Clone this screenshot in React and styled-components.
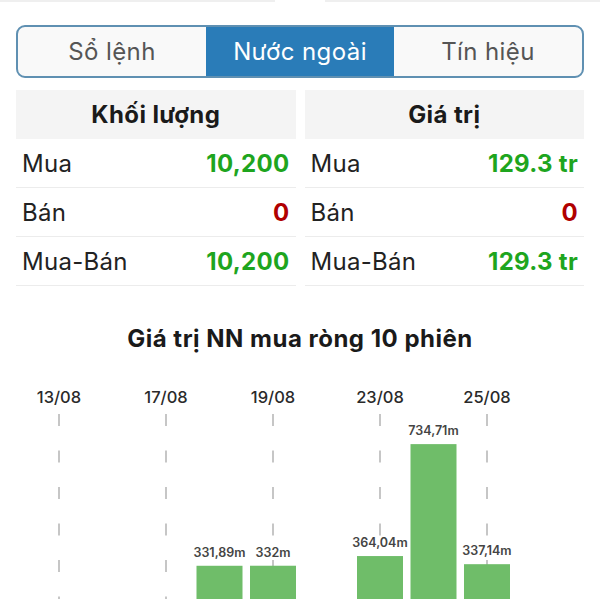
import React from 'react';
import styled, { createGlobalStyle } from 'styled-components';

const Global = createGlobalStyle`
  body {
    margin: 0;
    background: #ffffff;
    font-family: Inter, Roboto, "Liberation Sans", Arial, sans-serif;
  }
`;

const Page = styled.div`
  width: 600px;
  height: 600px;
  overflow: hidden;
  background: #fff;
`;

const TopEdge = styled.div`
  display: flex;
  gap: 50px;
  height: 2px;
  & > span {
    flex: 1;
    background: #efefef;
  }
`;

const Inner = styled.div`
  padding: 0 16px;
`;

const Segmented = styled.div`
  margin-top: 23px;
  display: grid;
  grid-template-columns: 1fr 1fr 1fr;
  height: 53px;
  box-sizing: border-box;
  border: 2px solid #5f90b2;
  border-radius: 9px;
  overflow: hidden;
  background: #f9f9f9;
`;

const Segment = styled.div`
  display: flex;
  align-items: center;
  justify-content: center;
  font-size: 24px;
  letter-spacing: 0.4px;
  color: ${p => (p.active ? '#ffffff' : '#555555')};
  background: ${p => (p.active ? '#2a7cb8' : 'transparent')};
`;

const Tables = styled.div`
  margin-top: 12px;
  display: grid;
  grid-template-columns: 1fr 1fr;
  column-gap: 9px;
`;

const Column = styled.div`
  display: flex;
  flex-direction: column;
`;

const Header = styled.div`
  height: 49px;
  display: flex;
  align-items: center;
  justify-content: center;
  background: #f4f4f4;
  font-size: 24px;
  font-weight: 700;
  letter-spacing: 0.4px;
  color: #1a1a1a;
`;

const Row = styled.div`
  height: 48px;
  border-bottom: 1px solid #ececec;
  display: flex;
  align-items: center;
  justify-content: space-between;
  padding: 0 6px;
  font-size: 24px;
  letter-spacing: 0.3px;
`;

const Label = styled.span`
  color: #222;
`;

const Value = styled.span`
  font-weight: 700;
  color: ${p => (p.tone === 'down' ? '#b00000' : '#1ea51e')};
`;

const ChartTitle = styled.h2`
  margin: 38px 0 0;
  height: 30px;
  line-height: 30px;
  text-align: center;
  font-size: 24px;
  font-weight: 700;
  letter-spacing: 0.5px;
  color: #1a1a1a;
`;

const Chart = styled.svg`
  display: block;
  margin-top: 15px;
`;

const tabs = ['Sổ lệnh', 'Nước ngoài', 'Tín hiệu'];

const tables = [
  {
    title: 'Khối lượng',
    rows: [
      ['Mua', '10,200', 'up'],
      ['Bán', '0', 'down'],
      ['Mua-Bán', '10,200', 'up'],
    ],
  },
  {
    title: 'Giá trị',
    rows: [
      ['Mua', '129.3 tr', 'up'],
      ['Bán', '0', 'down'],
      ['Mua-Bán', '129.3 tr', 'up'],
    ],
  },
];

const sessions = [
  { date: '13/08', value: 0 },
  { date: '16/08', value: 0 },
  { date: '17/08', value: 0 },
  { date: '18/08', value: 331.89, label: '331,89m' },
  { date: '19/08', value: 332, label: '332m' },
  { date: '20/08', value: 0 },
  { date: '23/08', value: 364.04, label: '364,04m' },
  { date: '24/08', value: 734.71, label: '734,71m' },
  { date: '25/08', value: 337.14, label: '337,14m' },
  { date: '26/08', value: 0 },
];

const STEP = 53.5;
const X0 = 59;
const BASE = 297;
const SCALE = 0.302;
const BAR_W = 46;

function NetBuyChart() {
  return (
    <Chart width="600" height="230" viewBox="0 0 600 230">
      {sessions.map((s, i) =>
        i % 2 === 0 ? (
          <g key={s.date}>
            <text
              x={X0 + i * STEP}
              y={34}
              textAnchor="middle"
              fontSize="16.5"
              fontWeight="500"
              fill="#2a2a2a"
              fontFamily="Inter, Roboto, Arial, sans-serif"
            >
              {s.date}
            </text>
            <line
              x1={X0 + i * STEP}
              x2={X0 + i * STEP}
              y1={45}
              y2={230}
              stroke="#b4b4b4"
              strokeWidth="1.5"
              strokeDasharray="12 24.5"
            />
          </g>
        ) : null
      )}
      {sessions.map((s, i) => {
        if (!s.value) return null;
        const h = s.value * SCALE;
        const cx = X0 + i * STEP;
        return (
          <g key={'b' + s.date}>
            <rect x={cx - BAR_W / 2} y={BASE - h} width={BAR_W} height={h} fill="#6fbd69" />
            <text
              x={cx}
              y={BASE - h - 9}
              textAnchor="middle"
              fontSize="12.5"
              fontWeight="600"
              fill="#444"
              fontFamily="Inter, Roboto, Arial, sans-serif"
            >
              {s.label}
            </text>
          </g>
        );
      })}
    </Chart>
  );
}

export default function App() {
  return (
    <Page>
      <Global />
      <TopEdge>
        <span />
        <span />
      </TopEdge>
      <Inner>
        <Segmented>
          {tabs.map((t, i) => (
            <Segment key={t} active={i === 1}>
              {t}
            </Segment>
          ))}
        </Segmented>
        <Tables>
          {tables.map(tb => (
            <Column key={tb.title}>
              <Header>{tb.title}</Header>
              {tb.rows.map(([l, v, tone]) => (
                <Row key={l}>
                  <Label>{l}</Label>
                  <Value tone={tone}>{v}</Value>
                </Row>
              ))}
            </Column>
          ))}
        </Tables>
      </Inner>
      <ChartTitle>Giá trị NN mua ròng 10 phiên</ChartTitle>
      <NetBuyChart />
    </Page>
  );
}
